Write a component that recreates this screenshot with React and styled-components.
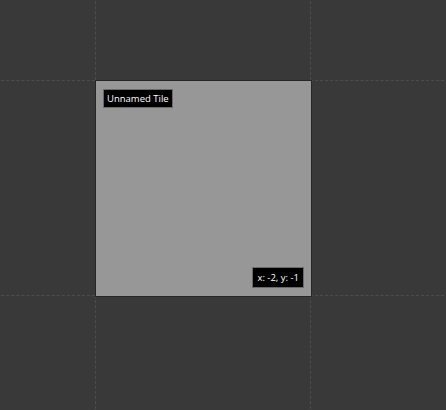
import React from "react";
import styled, { createGlobalStyle } from "styled-components";

const GlobalStyle = createGlobalStyle`
  html, body {
    margin: 0;
    padding: 0;
    background: #393939;
    overflow: hidden;
  }
`;

const Canvas = styled.div`
  width: 446px;
  height: 410px;
  overflow: hidden;
  position: relative;
`;

const Grid = styled.div`
  display: grid;
  grid-template-columns: repeat(3, 215px);
  grid-auto-rows: 215px;
  margin: -135px 0 0 -120px;
`;

const Cell = styled.div`
  position: relative;
  border-left: 1px dashed #4d4d4d;
  border-top: 1px dashed #4d4d4d;
`;

const Tile = styled.div`
  position: absolute;
  z-index: 1;
  left: -1px;
  top: -1px;
  width: 217px;
  height: 217px;
  box-sizing: border-box;
  background: #979797;
  border: 1px solid #262626;
  display: flex;
  flex-direction: column;
  justify-content: space-between;
  align-items: flex-start;
  padding: 8px 7px;
  font-family: "Open Sans", "DejaVu Sans", sans-serif;
  font-size: 9.5px;
  color: #fff;
`;

const Label = styled.div`
  background: #000;
  border: 1px solid #6a6a6a;
  padding: 2px 3px;
  line-height: 13px;
  white-space: nowrap;
`;

const Coords = styled(Label)`
  align-self: flex-end;
  padding: 3px 4px 2px;
  line-height: 14px;
`;

function TileCard({ name, x, y }) {
  return (
    <Tile>
      <Label>{name}</Label>
      <Coords>
        x: {x}, y: {y}
      </Coords>
    </Tile>
  );
}

export default function App() {
  const cells = Array.from({ length: 9 }, (_, i) => i);
  return (
    <>
      <GlobalStyle />
      <Canvas>
        <Grid>
          {cells.map((i) =>
            i === 4 ? (
              <Cell key={i}>
                <TileCard name="Unnamed Tile" x={-2} y={-1} />
              </Cell>
            ) : (
              <Cell key={i} />
            )
          )}
        </Grid>
      </Canvas>
    </>
  );
}
